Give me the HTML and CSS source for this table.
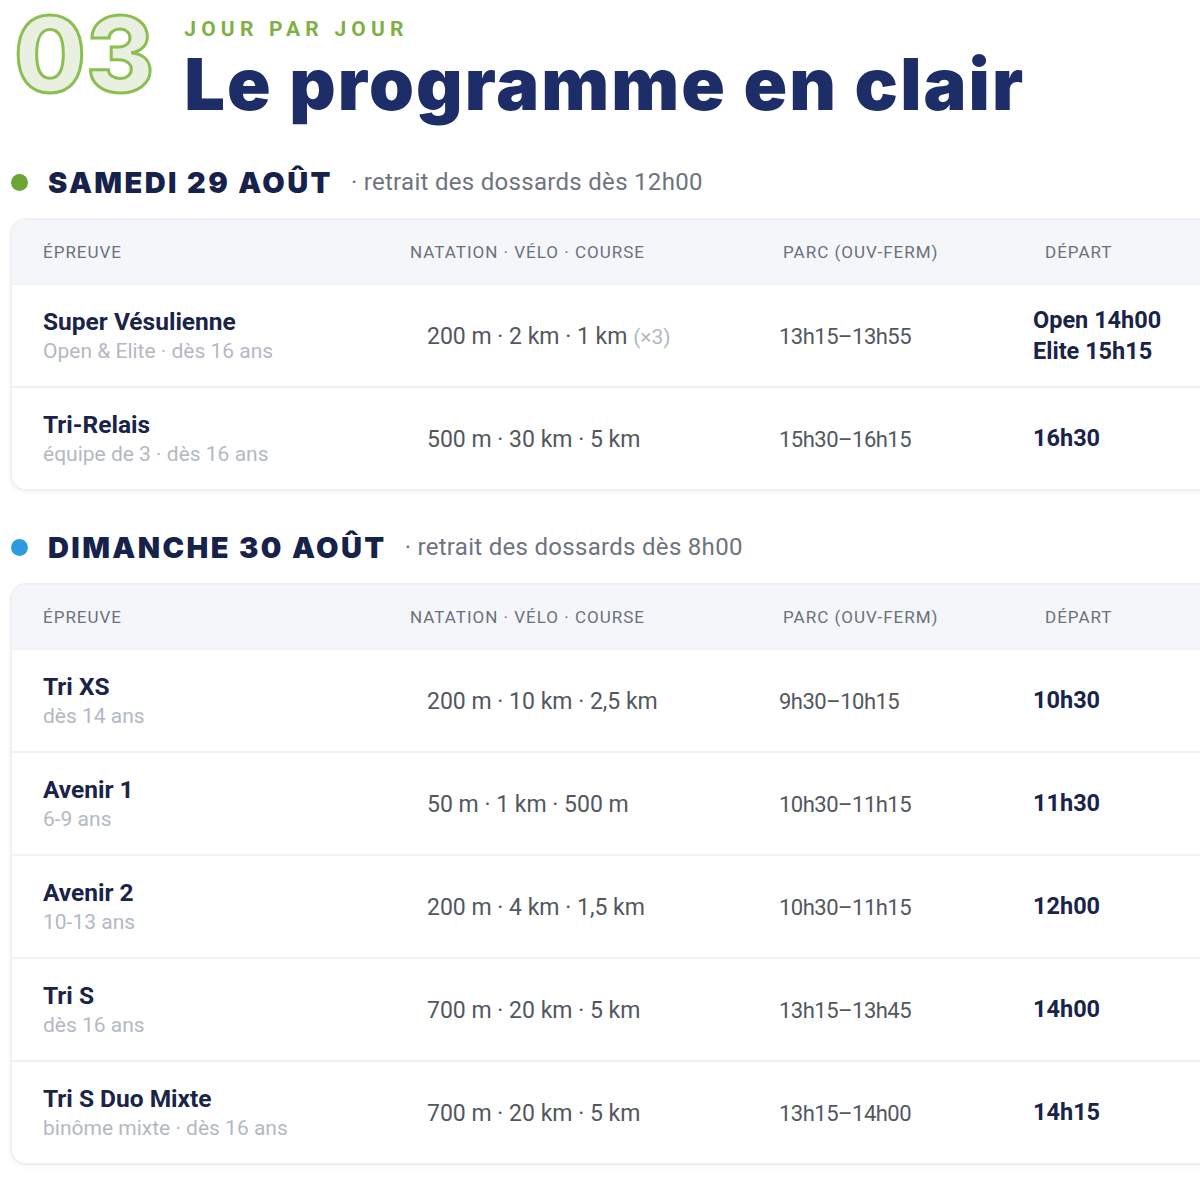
FILE: index.html
```html
<!DOCTYPE html>
<html lang="fr">
<head>
<meta charset="utf-8">
<title>Le programme en clair</title>
<link rel="stylesheet" href="styles.css">
</head>
<body>
<main class="page">
  <header class="hero">
    <div class="num">03</div>
    <div class="hero-text">
      <div class="kicker">JOUR PAR JOUR</div>
      <h1 class="title">Le programme en clair</h1>
    </div>
  </header>

  <section class="day">
    <h2 class="day-head"><span class="dot dot-green"></span><span class="day-title">SAMEDI 29 AOÛT</span><span class="day-note">· retrait des dossards dès 12h00</span></h2>
    <div class="card">
      <div class="row row-head">
        <div class="th">ÉPREUVE</div>
        <div class="th">NATATION · VÉLO · COURSE</div>
        <div class="th">PARC (OUV-FERM)</div>
        <div class="th">DÉPART</div>
      </div>
      <div class="row">
        <div class="ev"><div class="ev-name">Super Vésulienne</div><div class="ev-sub">Open &amp; Elite · dès 16 ans</div></div>
        <div class="dist">200 m · 2 km · 1 km <span class="mult">(×3)</span></div>
        <div class="parc">13h15–13h55</div>
        <div class="dep">Open 14h00<br>Elite 15h15</div>
      </div>
      <div class="row">
        <div class="ev"><div class="ev-name">Tri-Relais</div><div class="ev-sub">équipe de 3 · dès 16 ans</div></div>
        <div class="dist">500 m · 30 km · 5 km</div>
        <div class="parc">15h30–16h15</div>
        <div class="dep">16h30</div>
      </div>
    </div>
  </section>

  <section class="day">
    <h2 class="day-head"><span class="dot dot-blue"></span><span class="day-title">DIMANCHE 30 AOÛT</span><span class="day-note">· retrait des dossards dès 8h00</span></h2>
    <div class="card">
      <div class="row row-head">
        <div class="th">ÉPREUVE</div>
        <div class="th">NATATION · VÉLO · COURSE</div>
        <div class="th">PARC (OUV-FERM)</div>
        <div class="th">DÉPART</div>
      </div>
      <div class="row">
        <div class="ev"><div class="ev-name">Tri XS</div><div class="ev-sub">dès 14 ans</div></div>
        <div class="dist">200 m · 10 km · 2,5 km</div>
        <div class="parc">9h30–10h15</div>
        <div class="dep">10h30</div>
      </div>
      <div class="row">
        <div class="ev"><div class="ev-name">Avenir 1</div><div class="ev-sub">6-9 ans</div></div>
        <div class="dist">50 m · 1 km · 500 m</div>
        <div class="parc">10h30–11h15</div>
        <div class="dep">11h30</div>
      </div>
      <div class="row">
        <div class="ev"><div class="ev-name">Avenir 2</div><div class="ev-sub">10-13 ans</div></div>
        <div class="dist">200 m · 4 km · 1,5 km</div>
        <div class="parc">10h30–11h15</div>
        <div class="dep">12h00</div>
      </div>
      <div class="row">
        <div class="ev"><div class="ev-name">Tri S</div><div class="ev-sub">dès 16 ans</div></div>
        <div class="dist">700 m · 20 km · 5 km</div>
        <div class="parc">13h15–13h45</div>
        <div class="dep">14h00</div>
      </div>
      <div class="row">
        <div class="ev"><div class="ev-name">Tri S Duo Mixte</div><div class="ev-sub">binôme mixte · dès 16 ans</div></div>
        <div class="dist">700 m · 20 km · 5 km</div>
        <div class="parc">13h15–14h00</div>
        <div class="dep">14h15</div>
      </div>
    </div>
  </section>
</main>
</body>
</html>
```

FILE: styles.css
```css
* { box-sizing: border-box; }
html, body { margin: 0; padding: 0; background: #ffffff; overflow: hidden; }
body { font-family: "Roboto", "Liberation Sans", sans-serif; color: #1a2348; }

.page { padding: 0 0 0 10px; width: 1200px; }

.hero { display: flex; align-items: flex-start; gap: 28px; height: 162px; }
.num {
  font-family: "Inter", "Lato", sans-serif;
  font-weight: 800;
  font-size: 104px;
  line-height: 126px;
  letter-spacing: 0;
  color: #eaf0e1;
  -webkit-text-stroke: 3px #8cbf52;
  margin-top: -9px;
  margin-left: 2px;
  padding: 0 2px;
}
.hero-text { display: flex; flex-direction: column; padding-top: 17px; }
.kicker {
  font-family: "Roboto", sans-serif;
  font-weight: 700;
  font-size: 21px;
  line-height: 24px;
  letter-spacing: 5.2px;
  color: #80b043;
}
.title {
  margin: 8px 0 0;
  font-family: "Inter", "Lato", sans-serif;
  font-weight: 900;
  font-size: 72px;
  line-height: 70px;
  letter-spacing: 2.1px;
  color: #1c2d68;
}

.day-head { display: flex; align-items: center; margin: 0; height: 40px; font-weight: normal; }
.dot { width: 17px; height: 17px; border-radius: 50%; margin-left: 1px; }
.dot-green { background: #6ba534; }
.dot-blue { background: #2e9be1; }
.day-title {
  margin-left: 20px;
  font-family: "Inter", "Lato", sans-serif;
  font-weight: 900;
  font-size: 29px;
  letter-spacing: 2.4px;
  color: #17224b;
}
.day-note {
  margin-left: 18px;
  font-family: "Roboto", sans-serif;
  font-size: 24px;
  color: #6e7380;
  letter-spacing: 0.3px;
}

.day { margin-bottom: 36px; }
.day .card { margin-top: 16px; }

.card {
  width: 1230px;
  border: 2px solid #eef0f3;
  border-radius: 16px;
  overflow: hidden;
  background: #fff;
  box-shadow: 0 2px 4px rgba(20, 30, 60, 0.04);
}
.row {
  display: grid;
  grid-template-columns: 367px 373px 262px 1fr;
  align-items: center;
  padding-left: 31px;
  height: 103px;
  border-top: 2px solid #eff1f4;
}
.row-head { height: 63px; border-top: none; background: #f4f6f9; }
.th {
  font-family: "Roboto", sans-serif;
  font-size: 17px;
  letter-spacing: 1px;
  color: #6b717d;
}
.ev-name { font-family: "Roboto", sans-serif; font-weight: 700; font-size: 24.5px; color: #1a2348; line-height: 29px; }
.ev-sub { font-family: "Roboto", sans-serif; font-size: 21px; color: #b3b9c3; line-height: 27px; margin-top: 2px; }
.dist { padding-left: 17px; font-size: 23px; color: #53575f; margin-top: 2px; }
.mult { color: #b3b9c3; font-size: 21px; }
.parc { margin-left: -4px; font-size: 22px; letter-spacing: -0.5px; color: #53575f; margin-top: 2px; }
.dep { margin-left: -12px; font-weight: 700; font-size: 23.5px; line-height: 31px; color: #1a2348; }
```
